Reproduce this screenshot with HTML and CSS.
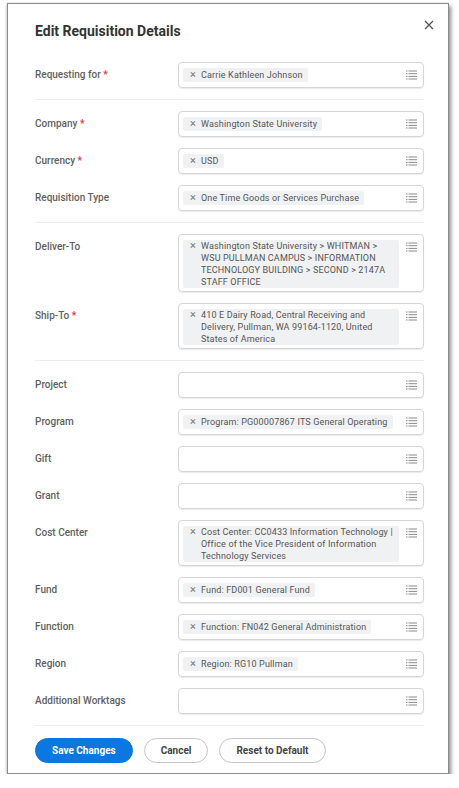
FILE: index.html
```html
<!DOCTYPE html>
<html>
<head>
<meta charset="utf-8">
<link rel="stylesheet" href="styles.css">
</head>
<body>
<div class="card">
  <div class="header">
    <h1 class="title">Edit Requisition Details</h1>
    <svg class="close" viewBox="0 0 10 10" width="10" height="10"><path d="M1 1L9 9M9 1L1 9" stroke="#555" stroke-width="1.3" fill="none"/></svg>
  </div>
  <div class="form">
    <div class="row">
      <div class="label">Requesting for <span class="req">*</span></div>
      <div class="field"><div class="chips"><span class="chip"><span class="x">×</span><span class="ct">Carrie Kathleen Johnson</span></span></div><svg class="prompt" viewBox="0 0 11 10" width="11" height="10"><g fill="#8a8a8a"><rect x="0" y="0.5" width="1.5" height="1"/><rect x="2.5" y="0.5" width="8.5" height="1"/><rect x="0" y="3.2" width="1.5" height="1"/><rect x="2.5" y="3.2" width="8.5" height="1"/><rect x="0" y="5.9" width="1.5" height="1"/><rect x="2.5" y="5.9" width="8.5" height="1"/><rect x="0" y="8.5" width="1.5" height="1"/><rect x="2.5" y="8.5" width="8.5" height="1"/></g></svg></div>
    </div>
    <div class="divider"></div>
    <div class="row">
      <div class="label">Company <span class="req">*</span></div>
      <div class="field"><div class="chips"><span class="chip"><span class="x">×</span><span class="ct">Washington State University</span></span></div><svg class="prompt" viewBox="0 0 11 10" width="11" height="10"><g fill="#8a8a8a"><rect x="0" y="0.5" width="1.5" height="1"/><rect x="2.5" y="0.5" width="8.5" height="1"/><rect x="0" y="3.2" width="1.5" height="1"/><rect x="2.5" y="3.2" width="8.5" height="1"/><rect x="0" y="5.9" width="1.5" height="1"/><rect x="2.5" y="5.9" width="8.5" height="1"/><rect x="0" y="8.5" width="1.5" height="1"/><rect x="2.5" y="8.5" width="8.5" height="1"/></g></svg></div>
    </div>
    <div class="row">
      <div class="label">Currency <span class="req">*</span></div>
      <div class="field"><div class="chips"><span class="chip"><span class="x">×</span><span class="ct">USD</span></span></div><svg class="prompt" viewBox="0 0 11 10" width="11" height="10"><g fill="#8a8a8a"><rect x="0" y="0.5" width="1.5" height="1"/><rect x="2.5" y="0.5" width="8.5" height="1"/><rect x="0" y="3.2" width="1.5" height="1"/><rect x="2.5" y="3.2" width="8.5" height="1"/><rect x="0" y="5.9" width="1.5" height="1"/><rect x="2.5" y="5.9" width="8.5" height="1"/><rect x="0" y="8.5" width="1.5" height="1"/><rect x="2.5" y="8.5" width="8.5" height="1"/></g></svg></div>
    </div>
    <div class="row">
      <div class="label">Requisition Type</div>
      <div class="field"><div class="chips"><span class="chip"><span class="x">×</span><span class="ct">One Time Goods or Services Purchase</span></span></div><svg class="prompt" viewBox="0 0 11 10" width="11" height="10"><g fill="#8a8a8a"><rect x="0" y="0.5" width="1.5" height="1"/><rect x="2.5" y="0.5" width="8.5" height="1"/><rect x="0" y="3.2" width="1.5" height="1"/><rect x="2.5" y="3.2" width="8.5" height="1"/><rect x="0" y="5.9" width="1.5" height="1"/><rect x="2.5" y="5.9" width="8.5" height="1"/><rect x="0" y="8.5" width="1.5" height="1"/><rect x="2.5" y="8.5" width="8.5" height="1"/></g></svg></div>
    </div>
    <div class="divider"></div>
    <div class="row">
      <div class="label">Deliver-To</div>
      <div class="field multi"><div class="chips"><span class="chip"><span class="x">×</span><span class="ct">Washington State University &gt; WHITMAN &gt; WSU PULLMAN CAMPUS &gt; INFORMATION TECHNOLOGY BUILDING &gt; SECOND &gt; 2147A STAFF OFFICE</span></span></div><svg class="prompt" viewBox="0 0 11 10" width="11" height="10"><g fill="#8a8a8a"><rect x="0" y="0.5" width="1.5" height="1"/><rect x="2.5" y="0.5" width="8.5" height="1"/><rect x="0" y="3.2" width="1.5" height="1"/><rect x="2.5" y="3.2" width="8.5" height="1"/><rect x="0" y="5.9" width="1.5" height="1"/><rect x="2.5" y="5.9" width="8.5" height="1"/><rect x="0" y="8.5" width="1.5" height="1"/><rect x="2.5" y="8.5" width="8.5" height="1"/></g></svg></div>
    </div>
    <div class="row">
      <div class="label">Ship-To <span class="req">*</span></div>
      <div class="field multi"><div class="chips"><span class="chip"><span class="x">×</span><span class="ct">410 E Dairy Road, Central Receiving and Delivery, Pullman, WA 99164-1120, United States of America</span></span></div><svg class="prompt" viewBox="0 0 11 10" width="11" height="10"><g fill="#8a8a8a"><rect x="0" y="0.5" width="1.5" height="1"/><rect x="2.5" y="0.5" width="8.5" height="1"/><rect x="0" y="3.2" width="1.5" height="1"/><rect x="2.5" y="3.2" width="8.5" height="1"/><rect x="0" y="5.9" width="1.5" height="1"/><rect x="2.5" y="5.9" width="8.5" height="1"/><rect x="0" y="8.5" width="1.5" height="1"/><rect x="2.5" y="8.5" width="8.5" height="1"/></g></svg></div>
    </div>
    <div class="divider"></div>
    <div class="row">
      <div class="label">Project</div>
      <div class="field"><div class="chips"></div><svg class="prompt" viewBox="0 0 11 10" width="11" height="10"><g fill="#8a8a8a"><rect x="0" y="0.5" width="1.5" height="1"/><rect x="2.5" y="0.5" width="8.5" height="1"/><rect x="0" y="3.2" width="1.5" height="1"/><rect x="2.5" y="3.2" width="8.5" height="1"/><rect x="0" y="5.9" width="1.5" height="1"/><rect x="2.5" y="5.9" width="8.5" height="1"/><rect x="0" y="8.5" width="1.5" height="1"/><rect x="2.5" y="8.5" width="8.5" height="1"/></g></svg></div>
    </div>
    <div class="row">
      <div class="label">Program</div>
      <div class="field"><div class="chips"><span class="chip"><span class="x">×</span><span class="ct">Program: PG00007867 ITS General Operating</span></span></div><svg class="prompt" viewBox="0 0 11 10" width="11" height="10"><g fill="#8a8a8a"><rect x="0" y="0.5" width="1.5" height="1"/><rect x="2.5" y="0.5" width="8.5" height="1"/><rect x="0" y="3.2" width="1.5" height="1"/><rect x="2.5" y="3.2" width="8.5" height="1"/><rect x="0" y="5.9" width="1.5" height="1"/><rect x="2.5" y="5.9" width="8.5" height="1"/><rect x="0" y="8.5" width="1.5" height="1"/><rect x="2.5" y="8.5" width="8.5" height="1"/></g></svg></div>
    </div>
    <div class="row">
      <div class="label">Gift</div>
      <div class="field"><div class="chips"></div><svg class="prompt" viewBox="0 0 11 10" width="11" height="10"><g fill="#8a8a8a"><rect x="0" y="0.5" width="1.5" height="1"/><rect x="2.5" y="0.5" width="8.5" height="1"/><rect x="0" y="3.2" width="1.5" height="1"/><rect x="2.5" y="3.2" width="8.5" height="1"/><rect x="0" y="5.9" width="1.5" height="1"/><rect x="2.5" y="5.9" width="8.5" height="1"/><rect x="0" y="8.5" width="1.5" height="1"/><rect x="2.5" y="8.5" width="8.5" height="1"/></g></svg></div>
    </div>
    <div class="row">
      <div class="label">Grant</div>
      <div class="field"><div class="chips"></div><svg class="prompt" viewBox="0 0 11 10" width="11" height="10"><g fill="#8a8a8a"><rect x="0" y="0.5" width="1.5" height="1"/><rect x="2.5" y="0.5" width="8.5" height="1"/><rect x="0" y="3.2" width="1.5" height="1"/><rect x="2.5" y="3.2" width="8.5" height="1"/><rect x="0" y="5.9" width="1.5" height="1"/><rect x="2.5" y="5.9" width="8.5" height="1"/><rect x="0" y="8.5" width="1.5" height="1"/><rect x="2.5" y="8.5" width="8.5" height="1"/></g></svg></div>
    </div>
    <div class="row">
      <div class="label">Cost Center</div>
      <div class="field multi"><div class="chips"><span class="chip"><span class="x">×</span><span class="ct">Cost Center: CC0433 Information Technology | Office of the Vice President of Information Technology Services</span></span></div><svg class="prompt" viewBox="0 0 11 10" width="11" height="10"><g fill="#8a8a8a"><rect x="0" y="0.5" width="1.5" height="1"/><rect x="2.5" y="0.5" width="8.5" height="1"/><rect x="0" y="3.2" width="1.5" height="1"/><rect x="2.5" y="3.2" width="8.5" height="1"/><rect x="0" y="5.9" width="1.5" height="1"/><rect x="2.5" y="5.9" width="8.5" height="1"/><rect x="0" y="8.5" width="1.5" height="1"/><rect x="2.5" y="8.5" width="8.5" height="1"/></g></svg></div>
    </div>
    <div class="row">
      <div class="label">Fund</div>
      <div class="field"><div class="chips"><span class="chip"><span class="x">×</span><span class="ct">Fund: FD001 General Fund</span></span></div><svg class="prompt" viewBox="0 0 11 10" width="11" height="10"><g fill="#8a8a8a"><rect x="0" y="0.5" width="1.5" height="1"/><rect x="2.5" y="0.5" width="8.5" height="1"/><rect x="0" y="3.2" width="1.5" height="1"/><rect x="2.5" y="3.2" width="8.5" height="1"/><rect x="0" y="5.9" width="1.5" height="1"/><rect x="2.5" y="5.9" width="8.5" height="1"/><rect x="0" y="8.5" width="1.5" height="1"/><rect x="2.5" y="8.5" width="8.5" height="1"/></g></svg></div>
    </div>
    <div class="row">
      <div class="label">Function</div>
      <div class="field"><div class="chips"><span class="chip"><span class="x">×</span><span class="ct">Function: FN042 General Administration</span></span></div><svg class="prompt" viewBox="0 0 11 10" width="11" height="10"><g fill="#8a8a8a"><rect x="0" y="0.5" width="1.5" height="1"/><rect x="2.5" y="0.5" width="8.5" height="1"/><rect x="0" y="3.2" width="1.5" height="1"/><rect x="2.5" y="3.2" width="8.5" height="1"/><rect x="0" y="5.9" width="1.5" height="1"/><rect x="2.5" y="5.9" width="8.5" height="1"/><rect x="0" y="8.5" width="1.5" height="1"/><rect x="2.5" y="8.5" width="8.5" height="1"/></g></svg></div>
    </div>
    <div class="row">
      <div class="label">Region</div>
      <div class="field"><div class="chips"><span class="chip"><span class="x">×</span><span class="ct">Region: RG10 Pullman</span></span></div><svg class="prompt" viewBox="0 0 11 10" width="11" height="10"><g fill="#8a8a8a"><rect x="0" y="0.5" width="1.5" height="1"/><rect x="2.5" y="0.5" width="8.5" height="1"/><rect x="0" y="3.2" width="1.5" height="1"/><rect x="2.5" y="3.2" width="8.5" height="1"/><rect x="0" y="5.9" width="1.5" height="1"/><rect x="2.5" y="5.9" width="8.5" height="1"/><rect x="0" y="8.5" width="1.5" height="1"/><rect x="2.5" y="8.5" width="8.5" height="1"/></g></svg></div>
    </div>
    <div class="row">
      <div class="label">Additional Worktags</div>
      <div class="field"><div class="chips"></div><svg class="prompt" viewBox="0 0 11 10" width="11" height="10"><g fill="#8a8a8a"><rect x="0" y="0.5" width="1.5" height="1"/><rect x="2.5" y="0.5" width="8.5" height="1"/><rect x="0" y="3.2" width="1.5" height="1"/><rect x="2.5" y="3.2" width="8.5" height="1"/><rect x="0" y="5.9" width="1.5" height="1"/><rect x="2.5" y="5.9" width="8.5" height="1"/><rect x="0" y="8.5" width="1.5" height="1"/><rect x="2.5" y="8.5" width="8.5" height="1"/></g></svg></div>
    </div>
    <div class="divider"></div>
    <div class="actions">
      <button class="btn primary">Save Changes</button>
      <button class="btn secondary">Cancel</button>
      <button class="btn secondary">Reset to Default</button>
    </div>
  </div>
</div>
</body>
</html>
```
FILE: styles.css
```css
* { box-sizing: border-box; }
html, body { margin: 0; padding: 0; background: #fff; }
body { font-family: Roboto, "Noto Sans", sans-serif; }
.card {
  margin: 3px 0 0 7px;
  width: 442px;
  height: 771px;
  border: 1px solid #8c8c8c;
  box-shadow: 2px 3px 4px rgba(0,0,0,0.45), -1px 0 2px rgba(0,0,0,0.15);
  background: #fff;
  padding: 18px 24px 0 27px;
}
.header {
  display: flex;
  justify-content: space-between;
  align-items: flex-start;
  height: 18px;
  margin-bottom: 22px;
}
.title {
  margin: 0;
  font-size: 14px;
  line-height: 18px;
  font-weight: 700;
  color: #333;
}
.close { margin-top: -2px; margin-right: -10px; }
.form {
  display: flex;
  flex-direction: column;
  gap: 11px;
}
.row { display: flex; align-items: flex-start; }
.label {
  width: 143px;
  flex: none;
  font-size: 10px;
  line-height: 12px;
  padding-top: 7px;
  font-weight: 500;
  color: #5f5f5f;
}
.req { color: #e0393e; font-weight: 700; }
.field {
  flex: 1;
  height: 26px;
  border: 1px solid #d6d6d6;
  border-radius: 4px;
  box-shadow: 0 1px 1px rgba(0,0,0,0.08);
  padding: 5px 6px 5px 4px;
  display: flex;
  align-items: flex-start;
  gap: 7px;
}
.field.multi { height: auto; padding-top: 5px; padding-bottom: 3px; }
.chips { flex: 1; min-width: 0; display: flex; }
.chip {
  display: inline-flex;
  align-items: flex-start;
  background: #f0f1f2;
  border-radius: 2px;
  padding: 1px 5px 1px 7px;
  font-size: 9px;
  line-height: 12px;
  letter-spacing: 0.15px;
  color: #555;
  max-width: 100%;
}
.multi .chip { padding-top: 0; padding-bottom: 0; }
.x { width: 6px; margin-right: 5px; flex: none; font-size: 11px; line-height: 12px; color: #777; letter-spacing: 0; }
.prompt { flex: none; margin-top: 2px; }
.divider { height: 1px; background: #ededed; }
.actions { display: flex; gap: 11px; margin-top: 1px; }
.btn {
  font-family: Roboto, "Noto Sans", sans-serif;
  height: 25px;
  border-radius: 13px;
  font-size: 10px;
  font-weight: 700;
  padding: 0 16px;
  white-space: nowrap;
  cursor: pointer;
}
.primary { background: #0b77e0; color: #fff; border: 1px solid #0b77e0; }
.secondary { background: #fff; color: #444; border: 1px solid #c4c4c4; }
```
